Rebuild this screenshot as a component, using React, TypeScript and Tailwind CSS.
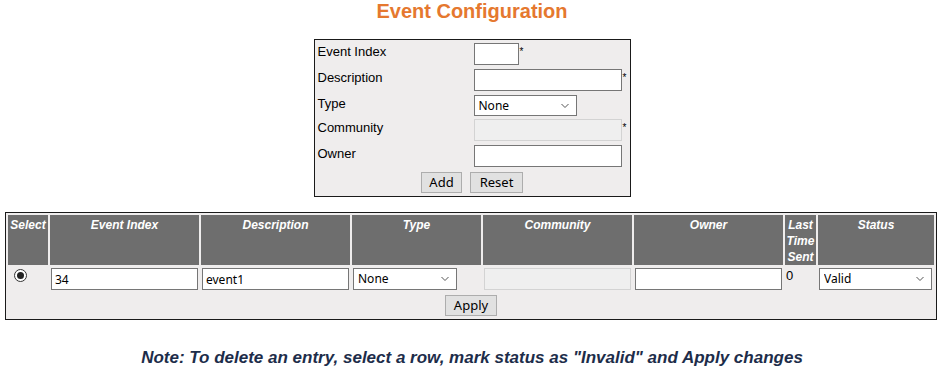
import React from 'react';

type FormRow = {
  label: string;
  kind: 'text' | 'select' | 'disabled';
  width: string;
  height: string;
  required?: boolean;
};

const FORM_ROWS: FormRow[] = [
  { label: 'Event Index', kind: 'text', width: 'w-[45px]', height: 'h-[26px]', required: true },
  { label: 'Description', kind: 'text', width: 'w-[148px]', height: 'h-[26px]', required: true },
  { label: 'Type', kind: 'select', width: 'w-[103px]', height: 'h-[24px]' },
  { label: 'Community', kind: 'disabled', width: 'w-[148px]', height: 'h-[26px]', required: true },
  { label: 'Owner', kind: 'text', width: 'w-[148px]', height: 'h-[26px]' },
];

const HEADERS = [
  { title: 'Select', width: 'w-[40px]' },
  { title: 'Event Index', width: 'w-[149px]' },
  { title: 'Description', width: 'w-[149px]' },
  { title: 'Type', width: 'w-[129px]' },
  { title: 'Community', width: 'w-[149px]' },
  { title: 'Owner', width: 'w-[149px]' },
  { title: 'Last Time Sent', width: 'w-[31px]' },
  { title: 'Status', width: 'w-[116px]' },
];

const inputFont = "font-['Noto_Sans',sans-serif] text-[12px]";

const Chevron = () => (
  <svg
    className="absolute right-[8px] top-1/2 -translate-y-1/2 pointer-events-none"
    width="8"
    height="5"
    viewBox="0 0 8 5"
  >
    <path d="M0.5 0.5 L4 4 L7.5 0.5" fill="none" stroke="#555" strokeWidth="1" />
  </svg>
);

const Select = ({ value, width, height }: { value: string; width: string; height: string }) => (
  <div className={`relative ${width} ${height}`}>
    <select
      defaultValue={value}
      className={`block appearance-none w-full h-full border border-[#767676] bg-white pl-[4px] pr-[18px] text-black outline-none ${inputFont}`}
    >
      <option>{value}</option>
    </select>
    <Chevron />
  </div>
);

const TextInput = ({
  value,
  width,
  disabled,
}: {
  value?: string;
  width: string;
  disabled?: boolean;
}) => (
  <input
    type="text"
    defaultValue={value}
    disabled={disabled}
    className={`block ${width} h-[22px] border px-[3px] outline-none text-black ${inputFont} ${
      disabled ? 'bg-[#efefef] border-[#d3d3d3]' : 'bg-white border-[#767676]'
    }`}
  />
);

const Button = ({ label, width }: { label: string; width: string }) => (
  <button
    className={`${width} h-[21px] bg-[#e1e1e1] border border-[#adadad] text-black leading-none align-top ${inputFont} text-[13px]`}
  >
    {label}
  </button>
);

const App: React.FC = () => {
  return (
    <div className="w-[944px] h-[370px] bg-white font-['Liberation_Sans',Arial,sans-serif] text-black overflow-hidden">
      <h1 className="text-center text-[20px] leading-[22px] font-bold text-[#e5782f]">
        Event Configuration
      </h1>

      <div className="mx-auto mt-[17px] w-[317px] border border-[#1a1a1a] bg-[#efeded] px-[3px] pt-[3px] pb-[3px]">
        {FORM_ROWS.map((row) => (
          <div key={row.label} className={`flex items-start ${row.height}`}>
            <div className="w-[156px] text-[13px] leading-[15px] pt-[1px]">{row.label}</div>
            {row.kind === 'select' ? (
              <Select value="None" width={row.width} height="h-[21px]" />
            ) : (
              <TextInput width={row.width} disabled={row.kind === 'disabled'} />
            )}
            {row.required && (
              <span className="ml-[1px] mt-[4px] text-[10px] leading-[10px]">*</span>
            )}
          </div>
        ))}
        <div className="flex justify-center gap-[8px] mt-[1px]">
          <Button label="Add" width="w-[41px]" />
          <Button label="Reset" width="w-[53px]" />
        </div>
      </div>

      <table className="ml-[5px] mt-[15px] w-[932px] table-fixed border-separate border-spacing-[2px] border border-[#1a1a1a] bg-[#efeded]">
        <thead>
          <tr>
            {HEADERS.map((h) => (
              <th
                key={h.title}
                className={`${h.width} h-[50px] p-0 pt-[2px] align-top bg-[#6e6e6e] text-white text-[12px] leading-[16px] font-bold italic text-center overflow-visible`}
              >
                {h.title}
              </th>
            ))}
          </tr>
        </thead>
        <tbody>
          <tr>
            <td className="p-[1px] align-top">
              <span className="ml-[5px] mt-[1px] w-[13px] h-[13px] rounded-full border border-[#333] bg-white flex items-center justify-center">
                <span className="w-[7px] h-[7px] rounded-full bg-[#222]" />
              </span>
            </td>
            <td className="p-[1px] align-top">
              <TextInput value="34" width="w-[147px]" />
            </td>
            <td className="p-[1px] align-top">
              <TextInput value="event1" width="w-[147px]" />
            </td>
            <td className="p-[1px] align-top">
              <Select value="None" width="w-[104px]" height="h-[22px]" />
            </td>
            <td className="p-[1px] align-top">
              <TextInput width="w-[147px]" disabled />
            </td>
            <td className="p-[1px] align-top">
              <TextInput width="w-[147px]" />
            </td>
            <td className="p-[1px] align-top text-[13px] leading-[15px]">0</td>
            <td className="p-[1px] align-top">
              <Select value="Valid" width="w-[113px]" height="h-[22px]" />
            </td>
          </tr>
          <tr>
            <td colSpan={8} className="p-[1px] pt-[2px] text-center leading-none">
              <Button label="Apply" width="w-[52px]" />
            </td>
          </tr>
        </tbody>
      </table>

      <p className="mt-[28px] text-center text-[17px] leading-[19px] font-bold italic text-[#1d2d4a]">
        Note: To delete an entry, select a row, mark status as "Invalid" and Apply changes
      </p>
    </div>
  );
};

export default App;
